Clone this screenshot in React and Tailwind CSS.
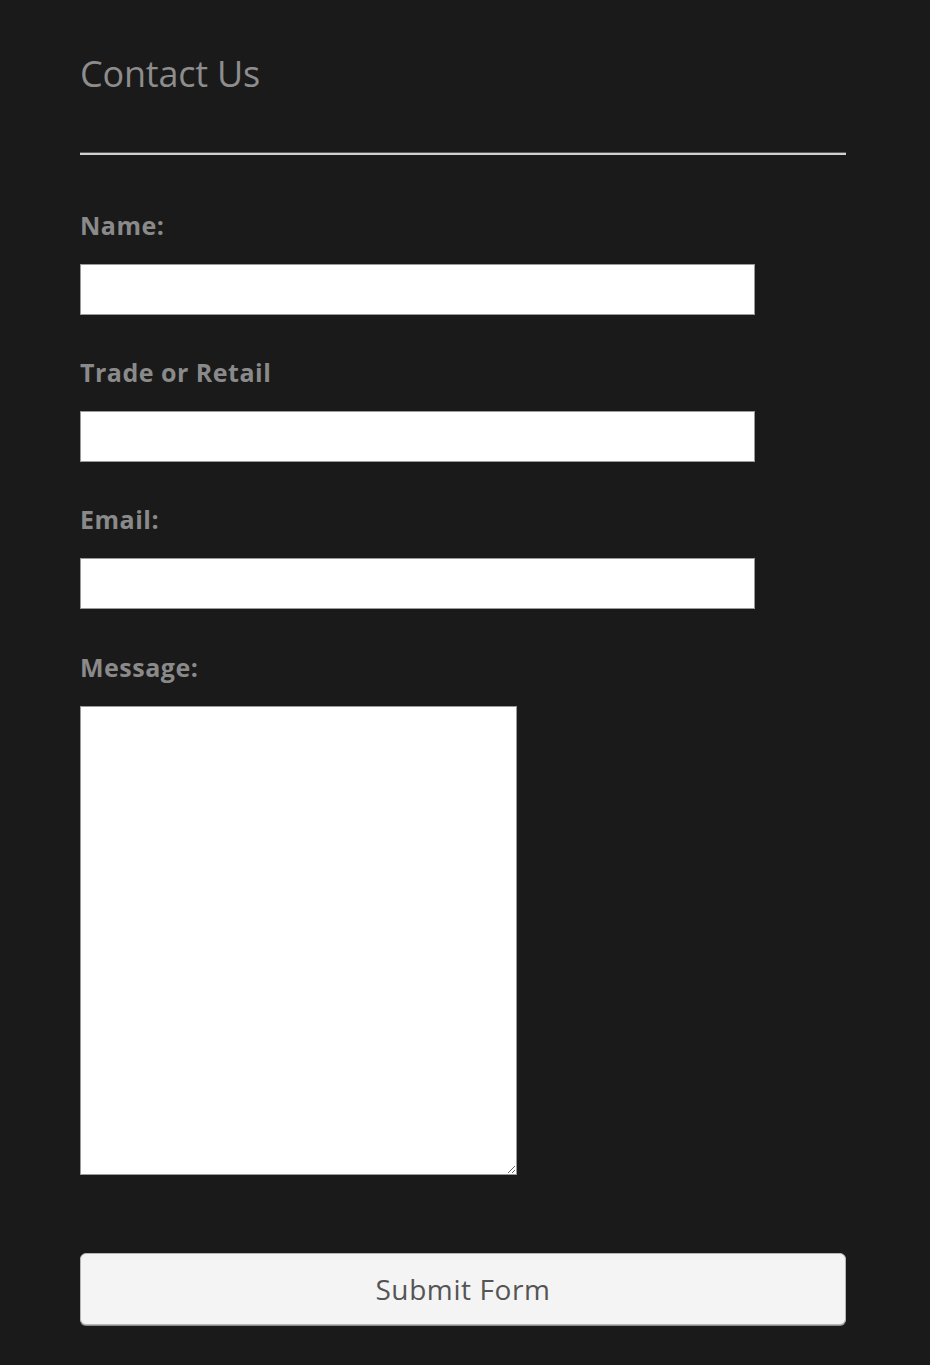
export default function App() {
  const fields = [
    { label: "Name:", name: "name" },
    { label: "Trade or Retail", name: "trade" },
    { label: "Email:", name: "email" },
  ];

  return (
    <div
      className="min-h-[1365px] w-full bg-[#1a1a1a] pt-[46px] pl-[80px]"
      style={{ fontFamily: '"Open Sans", "DejaVu Sans", sans-serif' }}
    >
      <div className="w-[766px]">
        <h2 className="text-[36px] leading-[56px] font-normal text-[#8d8d8d] tracking-[-0.2px]">
          Contact Us
        </h2>
        <div className="mt-[50px] h-[3px] w-full border-t border-[#5a5a5a] bg-[#d0d0d0]" />

        <form className="mt-[55px]" onSubmit={(e) => e.preventDefault()}>
          {fields.map((f, i) => (
            <div key={f.name} className={i === 0 ? "" : "mt-[42px]"}>
              <label className="block text-[25px] leading-[30px] font-bold text-[#8a8a8a] tracking-[0.5px]">
                {f.label}
              </label>
              <input
                type="text"
                name={f.name}
                className="mt-[24px] block h-[51px] w-[675px] border border-[#9a9a9a] bg-white outline-none"
              />
            </div>
          ))}

          <div className="mt-[43px]">
            <label className="block text-[25px] leading-[30px] font-bold text-[#8a8a8a] tracking-[0.5px]">
              Message:
            </label>
            <textarea
              name="message"
              className="mt-[24px] block h-[469px] w-[437px] border border-[#9a9a9a] bg-white outline-none"
            />
          </div>

          <button
            type="submit"
            className="mt-[78px] block h-[72px] w-[766px] rounded-[6px] border border-[#b5b5b5] bg-[#f4f4f4] text-[28px] text-[#555555] tracking-[0.6px] shadow-[0_1px_0_#8a8a8a]"
          >
            Submit Form
          </button>
        </form>
      </div>
    </div>
  );
}
